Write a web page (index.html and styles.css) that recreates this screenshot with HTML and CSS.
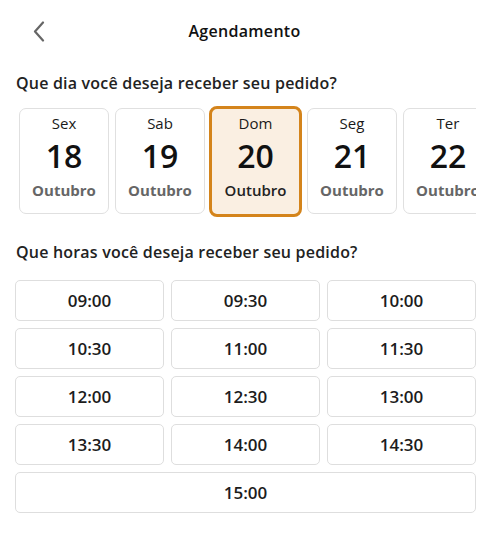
FILE: index.html
```html
<!DOCTYPE html>
<html lang="pt-BR">
<head>
<meta charset="utf-8">
<link rel="stylesheet" href="styles.css">
</head>
<body>
<div class="page">
  <header class="topbar">
    <button class="back" aria-label="Voltar">
      <svg width="12" height="21" viewBox="0 0 12 21"><path d="M10 1.5 L2 10.5 L10 19.5" fill="none" stroke="#666" stroke-width="2.2" stroke-linecap="round" stroke-linejoin="round"/></svg>
    </button>
    <h1 class="title">Agendamento</h1>
  </header>

  <h2 class="section-title">Que dia você deseja receber seu pedido?</h2>
  <div class="days">
    <div class="day"><span class="wd">Sex</span><span class="num">18</span><span class="mon">Outubro</span></div>
    <div class="day"><span class="wd">Sab</span><span class="num">19</span><span class="mon">Outubro</span></div>
    <div class="day selected"><span class="wd">Dom</span><span class="num">20</span><span class="mon">Outubro</span></div>
    <div class="day"><span class="wd">Seg</span><span class="num">21</span><span class="mon">Outubro</span></div>
    <div class="day"><span class="wd">Ter</span><span class="num">22</span><span class="mon">Outubro</span></div>
  </div>

  <h2 class="section-title hours-title">Que horas você deseja receber seu pedido?</h2>
  <div class="times">
    <div class="time">09:00</div>
    <div class="time">09:30</div>
    <div class="time">10:00</div>
    <div class="time">10:30</div>
    <div class="time">11:00</div>
    <div class="time">11:30</div>
    <div class="time">12:00</div>
    <div class="time">12:30</div>
    <div class="time">13:00</div>
    <div class="time">13:30</div>
    <div class="time">14:00</div>
    <div class="time">14:30</div>
    <div class="time wide">15:00</div>
  </div>
</div>
</body>
</html>
```
FILE: styles.css
```css
* { box-sizing: border-box; }
html, body { margin: 0; padding: 0; background: #fff; }
body {
  font-family: "Open Sans", "Noto Sans", sans-serif;
  color: #1a1a1a;
  width: 490px;
  height: 544px;
  overflow: hidden;
}
.page { padding: 0 13px 0 16px; }
.topbar {
  position: relative;
  height: 62px;
  display: flex;
  align-items: center;
  justify-content: center;
}
.back {
  position: absolute;
  left: 17px;
  top: 21px;
  border: 0;
  background: none;
  padding: 0;
  width: 12px;
  height: 21px;
  display: block;
}
.back svg { display: block; }
.title {
  margin: 0;
  font-size: 16px;
  font-weight: 600;
  letter-spacing: 0.3px;
  color: #111;
  transform: translateX(-2px);
}
.section-title {
  margin: 0;
  font-size: 16px;
  font-weight: 600;
  letter-spacing: 0.2px;
  color: #222;
  line-height: 20px;
  padding-top: 11px;
}
.days {
  display: flex;
  overflow: hidden;
  margin-top: 12px;
  padding: 3px 0;
  width: 460px;
}
.day {
  flex: 0 0 90px;
  height: 106px;
  margin: 0 3px;
  border: 1px solid #e0e0e0;
  border-radius: 7px;
  display: flex;
  flex-direction: column;
  align-items: center;
  padding-top: 5px;
}
.day .wd { font-size: 15px; font-weight: 500; color: #1a1a1a; line-height: 18px; }
.day .num { font-size: 32px; font-weight: 600; color: #111; line-height: 32px; margin-top: 8px; }
.day .mon { font-size: 15px; font-weight: 700; color: #666; line-height: 18px; margin-top: 9px; }
.day.selected {
  flex-basis: 93px;
  height: 111px;
  margin: -2px 2px -3px 1px;
  border: 3px solid #d4841b;
  background: #faefe2;
  border-radius: 8px;
  padding-top: 5px;
}
.day.selected .mon { color: #222; font-weight: 600; }
.hours-title { padding-top: 25px; }
.times {
  display: grid;
  grid-template-columns: repeat(3, 149px);
  gap: 7px;
  margin-top: 18px;
  margin-left: -1px;
}
.time {
  height: 41px;
  border: 1px solid #dedede;
  border-radius: 5px;
  display: flex;
  align-items: center;
  justify-content: center;
  font-size: 17px;
  font-weight: 600;
  color: #1c1c1c;
}
.time.wide { grid-column: 1 / -1; }
```
